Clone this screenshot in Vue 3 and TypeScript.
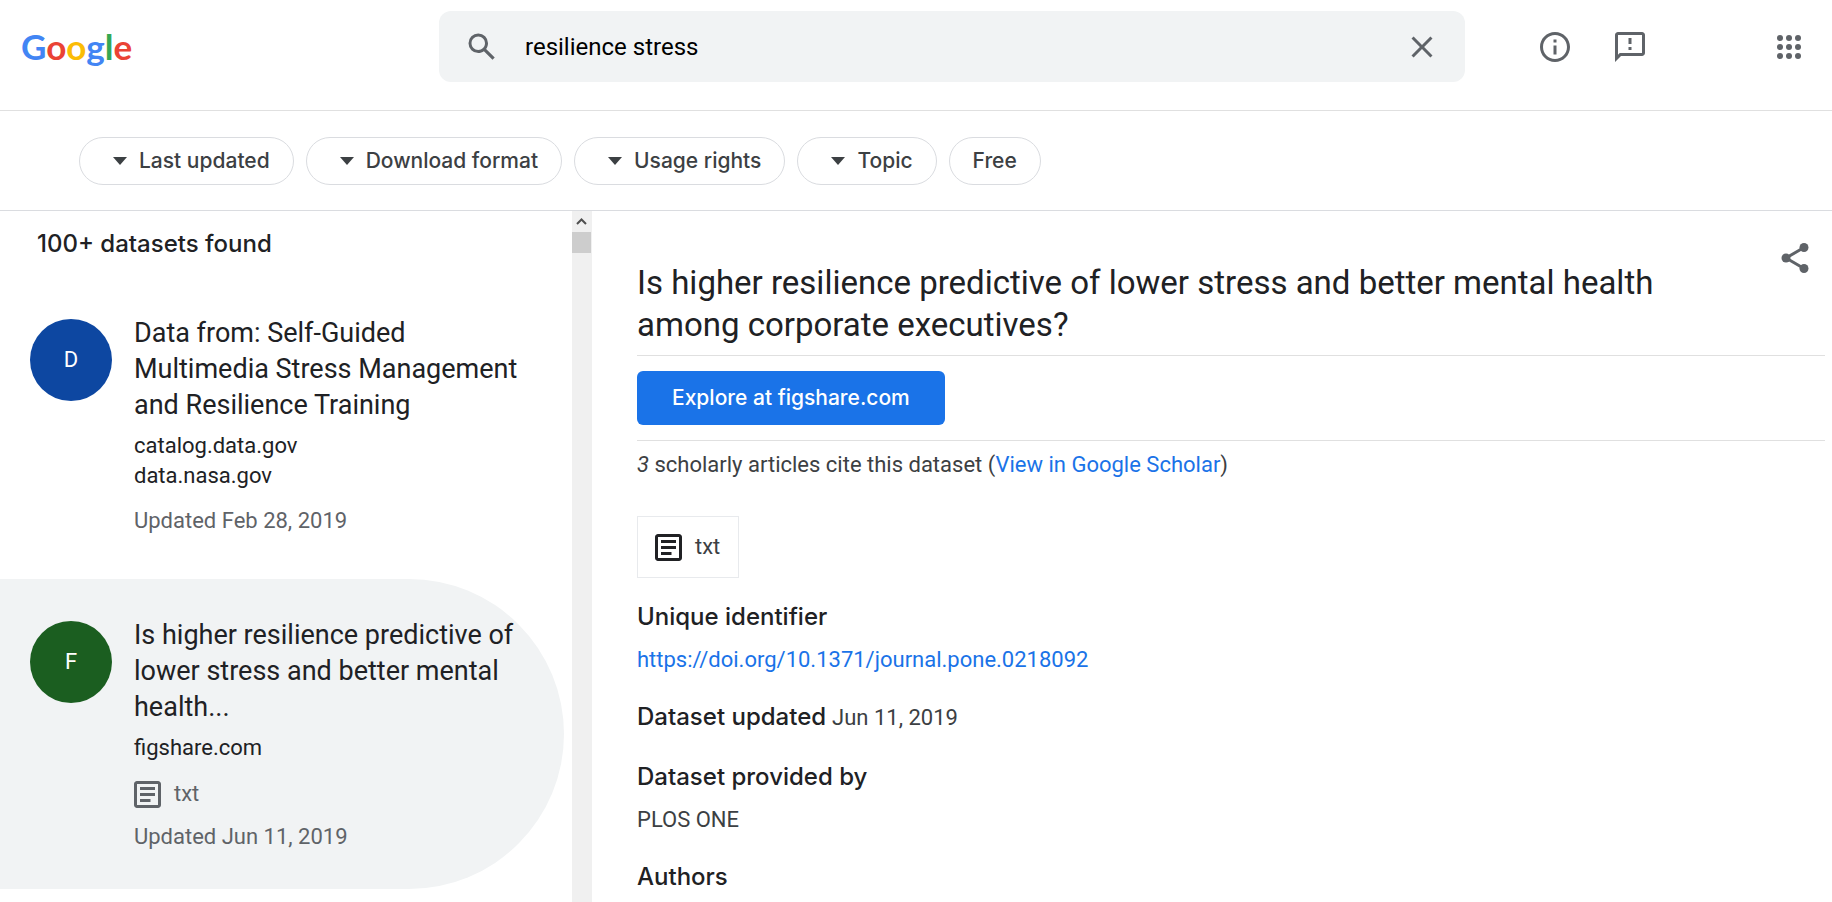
<script setup lang="ts">
import { ref } from 'vue'

interface Filter {
  label: string
  menu: boolean
}

interface Dataset {
  initial: string
  tone: 'blue' | 'green'
  title: string
  sources: string[]
  format?: string
  updated: string
}

const query = ref('resilience stress')
const selected = ref(1)

const logo = [
  { letter: 'G', tone: 'blue' },
  { letter: 'o', tone: 'red' },
  { letter: 'o', tone: 'yellow' },
  { letter: 'g', tone: 'blue' },
  { letter: 'l', tone: 'green' },
  { letter: 'e', tone: 'red' },
]

const filters: Filter[] = [
  { label: 'Last updated', menu: true },
  { label: 'Download format', menu: true },
  { label: 'Usage rights', menu: true },
  { label: 'Topic', menu: true },
  { label: 'Free', menu: false },
]

const datasets: Dataset[] = [
  {
    initial: 'D',
    tone: 'blue',
    title: 'Data from: Self-Guided Multimedia Stress Management and Resilience Training',
    sources: ['catalog.data.gov', 'data.nasa.gov'],
    updated: 'Updated Feb 28, 2019',
  },
  {
    initial: 'F',
    tone: 'green',
    title: 'Is higher resilience predictive of lower stress and better mental health...',
    sources: ['figshare.com'],
    format: 'txt',
    updated: 'Updated Jun 11, 2019',
  },
]
</script>

<template>
  <div class="app">
    <header class="topbar">
      <a class="logo" href="#" aria-label="Google"><span v-for="(l, i) in logo" :key="i" :class="l.tone">{{ l.letter }}</span></a>
      <form class="search" role="search" @submit.prevent>
        <button class="icon-btn" type="submit" aria-label="Search">
          <svg viewBox="0 0 24 24"><path d="M20.49 19l-5.73-5.73C15.53 12.2 16 10.91 16 9.5A6.5 6.5 0 1 0 9.5 16c1.41 0 2.7-.47 3.77-1.24L19 20.49 20.49 19zM5 9.5C5 7.01 7.01 5 9.5 5S14 7.01 14 9.5 11.99 14 9.5 14 5 11.99 5 9.5z" /></svg>
        </button>
        <input v-model="query" type="text" aria-label="Search datasets" />
        <button class="icon-btn" type="button" aria-label="Clear search" @click="query = ''">
          <svg viewBox="0 0 24 24"><path d="M19 6.41L17.59 5 12 10.59 6.41 5 5 6.41 10.59 12 5 17.59 6.41 19 12 13.41 17.59 19 19 17.59 13.41 12z" /></svg>
        </button>
      </form>
      <nav class="tools">
        <button class="icon-btn" type="button" aria-label="About">
          <svg viewBox="0 0 24 24"><path d="M11 7h2v2h-2zm0 4h2v6h-2zm1-9C6.48 2 2 6.48 2 12s4.48 10 10 10 10-4.48 10-10S17.52 2 12 2zm0 18c-4.41 0-8-3.59-8-8s3.59-8 8-8 8 3.59 8 8-3.59 8-8 8z" /></svg>
        </button>
        <button class="icon-btn" type="button" aria-label="Send feedback">
          <svg viewBox="0 0 24 24"><path d="M20 2H4c-1.1 0-2 .9-2 2v18l4-4h14c1.1 0 2-.9 2-2V4c0-1.1-.9-2-2-2zm0 14H5.17L4 17.17V4h16v12zM11 12h2v2h-2zm0-6h2v4h-2z" /></svg>
        </button>
        <button class="icon-btn apps" type="button" aria-label="Google apps">
          <svg viewBox="0 0 24 24">
            <template v-for="y in [6, 12, 18]" :key="y">
              <circle v-for="x in [6, 12, 18]" :key="x" :cx="x" :cy="y" r="2" />
            </template>
          </svg>
        </button>
      </nav>
    </header>

    <div class="filters">
      <button v-for="f in filters" :key="f.label" class="chip" :class="{ menu: f.menu }" type="button">
        <svg v-if="f.menu" viewBox="0 0 14 8"><path d="M0 0h14L7 8z" /></svg>
        {{ f.label }}
      </button>
    </div>

    <main class="content">
      <aside class="results">
        <div class="list">
          <h2 class="count">100+ datasets found</h2>
          <article
            v-for="(d, i) in datasets"
            :key="d.title"
            class="result"
            :class="{ selected: i === selected }"
            @click="selected = i"
          >
            <div class="avatar" :class="d.tone">{{ d.initial }}</div>
            <div class="summary">
              <h3>{{ d.title }}</h3>
              <ul>
                <li v-for="s in d.sources" :key="s">{{ s }}</li>
              </ul>
              <p v-if="d.format" class="format">
                <svg viewBox="3 3 18 18"><path d="M19 5v14H5V5h14m0-2H5c-1.1 0-2 .9-2 2v14c0 1.1.9 2 2 2h14c1.1 0 2-.9 2-2V5c0-1.1-.9-2-2-2zM14 17H7v-2h7v2zm3-4H7v-2h10v2zm0-4H7V7h10v2z" /></svg>
                {{ d.format }}
              </p>
              <p class="updated">{{ d.updated }}</p>
            </div>
          </article>
        </div>
        <div class="scrollbar" aria-hidden="true">
          <svg viewBox="0 0 20 21"><path d="M5 13l4.5-4.5L14 13" /></svg>
          <div class="thumb"></div>
        </div>
      </aside>

      <section class="detail">
        <div class="heading">
          <h1>Is higher resilience predictive of lower stress and better mental health among corporate executives?</h1>
          <button class="icon-btn" type="button" aria-label="Share">
            <svg viewBox="0 0 24 24"><path d="M6 12L18 5M6 12l12 7" fill="none" stroke="currentColor" stroke-width="2" /><circle cx="6" cy="12" r="3" /><circle cx="18" cy="5" r="3" /><circle cx="18" cy="19" r="3" /></svg>
          </button>
        </div>
        <div class="actions">
          <a class="explore" href="#">Explore at figshare.com</a>
        </div>
        <p class="cite"><em>3</em> scholarly articles cite this dataset (<a href="#">View in Google Scholar</a>)</p>
        <div class="file">
          <svg viewBox="3 3 18 18"><path d="M19 5v14H5V5h14m0-2H5c-1.1 0-2 .9-2 2v14c0 1.1.9 2 2 2h14c1.1 0 2-.9 2-2V5c0-1.1-.9-2-2-2zM14 17H7v-2h7v2zm3-4H7v-2h10v2zm0-4H7V7h10v2z" /></svg>
          txt
        </div>
        <div class="field">
          <h2>Unique identifier</h2>
          <p><a href="#">https://doi.org/10.1371/journal.pone.0218092</a></p>
        </div>
        <div class="field inline">
          <h2>Dataset updated</h2>
          <p>Jun 11, 2019</p>
        </div>
        <div class="field">
          <h2>Dataset provided by</h2>
          <p>PLOS ONE</p>
        </div>
        <div class="field">
          <h2>Authors</h2>
        </div>
      </section>
    </main>
  </div>
</template>

<style>
body {
  margin: 0;
  background: #fff;
}
</style>

<style scoped>
.app {
  display: flex;
  flex-direction: column;
  height: 100vh;
  overflow: hidden;
  color: #202124;
  font-family: Roboto, 'Liberation Sans', sans-serif;
  font-size: 22px;
  line-height: 30px;
}

.app * {
  box-sizing: border-box;
}

h1,
h2,
h3,
p,
ul {
  margin: 0;
  padding: 0;
  font-weight: 400;
}

ul {
  list-style: none;
}

a {
  color: #1a73e8;
  text-decoration: none;
}

button {
  font: inherit;
  cursor: pointer;
}

svg {
  display: block;
  flex: none;
  fill: currentColor;
}

.icon-btn {
  display: flex;
  flex: none;
  align-items: center;
  justify-content: center;
  width: 48px;
  height: 48px;
  padding: 0;
  border: 0;
  background: none;
  color: #5f6368;
}

.icon-btn svg {
  width: 36px;
  height: 36px;
}

.topbar {
  display: flex;
  flex: none;
  align-items: flex-start;
  padding: 11px 19px 28px 21px;
  border-bottom: 1px solid #e0e0e0;
}

.logo {
  flex: none;
  width: 418px;
  font-family: Lato, Roboto, sans-serif;
  font-size: 35px;
  font-weight: 700;
  line-height: 70px;
}

.logo .blue {
  color: #4285f4;
}

.logo .red {
  color: #ea4335;
}

.logo .yellow {
  color: #fbbc05;
}

.logo .green {
  color: #34a853;
}

.search {
  display: flex;
  flex: 1;
  align-items: center;
  height: 71px;
  padding: 0 19px;
  border-radius: 12px;
  background: #f1f3f4;
}

.search input {
  flex: 1;
  min-width: 0;
  padding: 0 19px;
  border: 0;
  outline: 0;
  background: none;
  color: #000;
  font: 24px/36px Roboto, 'Liberation Sans', sans-serif;
}

.tools {
  display: flex;
  flex: none;
  align-items: center;
  gap: 27px;
  width: 348px;
  height: 71px;
  padding-left: 66px;
}

.apps {
  margin-left: auto;
}

.filters {
  display: flex;
  flex: none;
  gap: 12px;
  padding: 26px 79px 25px;
  border-bottom: 1px solid #dadce0;
}

.chip {
  display: flex;
  align-items: center;
  gap: 12px;
  height: 48px;
  padding: 0 23px;
  border: 1px solid #dadce0;
  border-radius: 24px;
  background: #fff;
  color: #3c4043;
  font-family: Inter, Roboto, sans-serif;
  font-size: 21px;
  font-weight: 500;
}

.chip.menu {
  padding-left: 33px;
}

.chip svg {
  width: 14px;
  height: 8px;
}

.content {
  display: flex;
  flex: 1;
  min-height: 0;
}

.results {
  display: flex;
  flex: none;
  width: 592px;
  overflow: hidden;
}

.list {
  flex: 1;
  padding-right: 8px;
}

.count {
  padding: 18px 37px;
  font-family: Inter, Roboto, sans-serif;
  font-size: 24px;
  font-weight: 500;
}

.result {
  display: flex;
  gap: 22px;
  margin-bottom: 6px;
  padding: 38px 42px 37px 30px;
}

.result.selected {
  border-radius: 0 160px 160px 0;
  background: #f1f3f4;
}

.avatar {
  flex: none;
  width: 82px;
  height: 82px;
  margin-top: 4px;
  border-radius: 50%;
  color: #fff;
  font-size: 22px;
  line-height: 82px;
  text-align: center;
}

.avatar.blue {
  background: #0d47a1;
}

.avatar.green {
  background: #1b5e20;
}

.summary {
  flex: 1;
  min-width: 0;
}

.summary h3 {
  margin-bottom: 8px;
  font-size: 27px;
  line-height: 36px;
}

.summary .format {
  display: flex;
  align-items: center;
  gap: 13px;
  margin: 16px 0 13px;
  color: #5f6368;
}

.format svg,
.file svg {
  width: 27px;
  height: 27px;
}

.updated {
  color: #5f6368;
}

ul + .updated {
  margin-top: 15px;
}

.scrollbar {
  width: 20px;
  background: #f0f0f0;
}

.scrollbar svg {
  width: 20px;
  height: 21px;
  fill: none;
  stroke: #505050;
  stroke-width: 2;
}

.thumb {
  width: 19px;
  height: 21px;
  background: #cdcdcd;
}

.detail {
  flex: 1;
  min-width: 0;
  padding: 23px 7px 0 45px;
  overflow: hidden;
  color: #3c4043;
}

.heading {
  display: flex;
  align-items: flex-start;
  padding-bottom: 9px;
  border-bottom: 1px solid #e0e0e0;
}

.heading h1 {
  flex: 1;
  margin: 28px 60px 0 0;
  color: #202124;
  font-size: 33px;
  line-height: 42px;
}

.heading .icon-btn {
  margin-right: 6px;
}

.actions {
  display: flex;
  padding: 15px 0;
  border-bottom: 1px solid #e0e0e0;
}

.explore {
  padding: 12px 35px;
  border-radius: 6px;
  background: #1a73e8;
  color: #fff;
  font-family: Inter, Roboto, sans-serif;
  font-size: 21px;
  font-weight: 500;
}

.cite {
  margin: 9px 0 36px;
}

.file {
  display: flex;
  align-items: center;
  gap: 13px;
  width: fit-content;
  height: 62px;
  margin-bottom: 24px;
  padding: 0 18px 0 17px;
  border: 1px solid #e8eaed;
}

.file svg {
  color: #202124;
}

.field {
  margin-bottom: 27px;
}

.field h2 {
  margin-bottom: 13px;
  color: #202124;
  font-family: Inter, Roboto, sans-serif;
  font-size: 24px;
  font-weight: 500;
}

.field.inline {
  display: flex;
  align-items: baseline;
  gap: 6px;
  margin-bottom: 29px;
}

.field.inline h2 {
  margin: 0;
}
</style>
